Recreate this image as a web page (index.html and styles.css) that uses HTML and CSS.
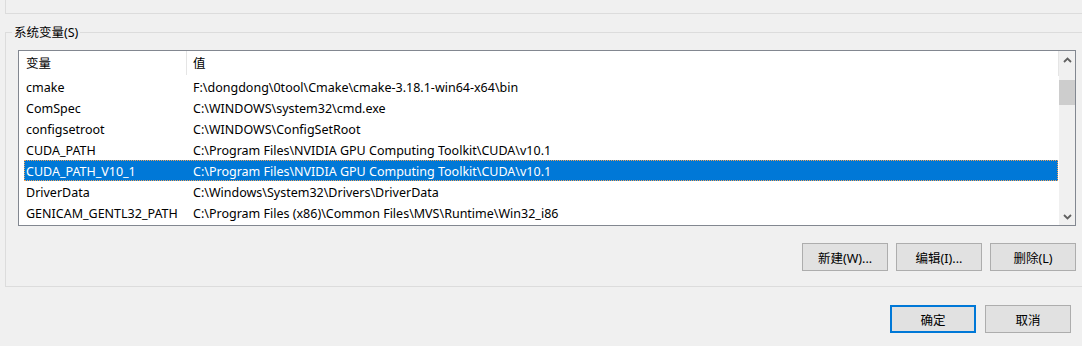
FILE: index.html
```html
<!DOCTYPE html>
<html lang="zh-CN">
<head>
    <meta charset="UTF-8">
    <title>环境变量</title>
    <link rel="stylesheet" href="styles.css">
</head>
<body>
    <div class="user-group"></div>

    <div class="group">
        <span class="legend">系统变量(S)</span>
        <div class="listbox">
            <div class="list-content">
                <div class="list-header">
                    <div class="col-name">变量</div>
                    <div class="col-value">值</div>
                </div>
                <div class="row"><div class="col-name">cmake</div><div class="col-value">F:\dongdong\0tool\Cmake\cmake-3.18.1-win64-x64\bin</div></div>
                <div class="row"><div class="col-name">ComSpec</div><div class="col-value">C:\WINDOWS\system32\cmd.exe</div></div>
                <div class="row"><div class="col-name">configsetroot</div><div class="col-value">C:\WINDOWS\ConfigSetRoot</div></div>
                <div class="row"><div class="col-name">CUDA_PATH</div><div class="col-value">C:\Program Files\NVIDIA GPU Computing Toolkit\CUDA\v10.1</div></div>
                <div class="row selected"><div class="col-name">CUDA_PATH_V10_1</div><div class="col-value">C:\Program Files\NVIDIA GPU Computing Toolkit\CUDA\v10.1</div></div>
                <div class="row"><div class="col-name">DriverData</div><div class="col-value">C:\Windows\System32\Drivers\DriverData</div></div>
                <div class="row"><div class="col-name">GENICAM_GENTL32_PATH</div><div class="col-value">C:\Program Files (x86)\Common Files\MVS\Runtime\Win32_i86</div></div>
            </div>
            <div class="scrollbar">
                <div class="arrow">
                    <svg width="9" height="6" viewBox="0 0 9 6"><path d="M1 5 L4.5 1.5 L8 5" fill="none" stroke="#606060" stroke-width="1.8"/></svg>
                </div>
                <div class="thumb"></div>
                <div class="track"></div>
                <div class="arrow">
                    <svg width="9" height="6" viewBox="0 0 9 6"><path d="M1 1 L4.5 4.5 L8 1" fill="none" stroke="#606060" stroke-width="1.8"/></svg>
                </div>
            </div>
        </div>
        <div class="group-buttons">
            <button class="btn">新建(W)...</button>
            <button class="btn">编辑(I)...</button>
            <button class="btn">删除(L)</button>
        </div>
    </div>

    <div class="dialog-buttons">
        <button class="btn default">确定</button>
        <button class="btn">取消</button>
    </div>
</body>
</html>
```

FILE: styles.css
```css
body {
    margin: 0;
    background: #f0f0f0;
    font-family: "Noto Sans", "Noto Sans CJK SC", sans-serif;
    font-size: 12px;
    color: #000;
    width: 1082px;
    height: 346px;
    overflow: hidden;
}
.user-group {
    height: 13px;
    margin-left: 5px;
    border-left: 1px solid #dcdcdc;
    border-bottom: 1px solid #dcdcdc;
}
.group {
    margin: 18px 0 0 5px;
    border: 1px solid #dcdcdc;
    border-right: none;
    padding: 0 0 15px 12px;
}
.legend {
    display: block;
    width: max-content;
    margin: -8px 0 0 -6px;
    padding: 0 2px;
    line-height: 16px;
    font-size: 12.5px;
    background: #f0f0f0;
}
.listbox {
    display: flex;
    width: 1056px;
    height: 174px;
    margin-top: 9px;
    border: 1px solid #828790;
    background: #fff;
}
.list-content {
    flex: 1;
    overflow: hidden;
    font-size: 12.5px;
}
.list-header {
    display: flex;
    height: 25px;
    line-height: 25px;
    border-right: 1px solid #e5e5e5;
}
.list-header .col-name {
    border-right: 1px solid #e5e5e5;
    height: 24px;
    margin-left: 5px;
}
.row {
    display: flex;
    height: 21px;
    line-height: 21px;
    margin-left: 5px;
    margin-right: 1px;
    border: 1px solid transparent;
    box-sizing: border-box;
    white-space: nowrap;
}
.row.selected {
    background: #0078d7;
    color: #fff;
    border: 1px dotted #f0a35a;
}
.col-name {
    width: 163px;
    padding-left: 2px;
    box-sizing: border-box;
    flex-shrink: 0;
}
.row .col-name {
    padding-left: 1px;
}
.col-value {
    padding-left: 6px;
}
.row .col-value {
    padding-left: 5px;
}
.scrollbar {
    width: 16px;
    display: flex;
    flex-direction: column;
    background: #f0f0f0;
}
.arrow {
    height: 17px;
    display: flex;
    align-items: center;
    justify-content: center;
}
.thumb {
    height: 25px;
    margin-top: 12px;
    background: #cdcdcd;
}
.track {
    flex: 1;
}
.group-buttons {
    display: flex;
    justify-content: flex-end;
    gap: 8px;
    width: 1058px;
    margin-top: 17px;
}
.btn {
    width: 86px;
    height: 28px;
    padding: 0;
    border: 1px solid #adadad;
    background: #e1e1e1;
    font-family: inherit;
    font-size: 12.5px;
    color: #000;
}
.btn.default {
    border: 2px solid #0078d7;
}
.dialog-buttons {
    display: flex;
    justify-content: flex-end;
    gap: 9px;
    margin: 18px 11px 0 0;
}
```
